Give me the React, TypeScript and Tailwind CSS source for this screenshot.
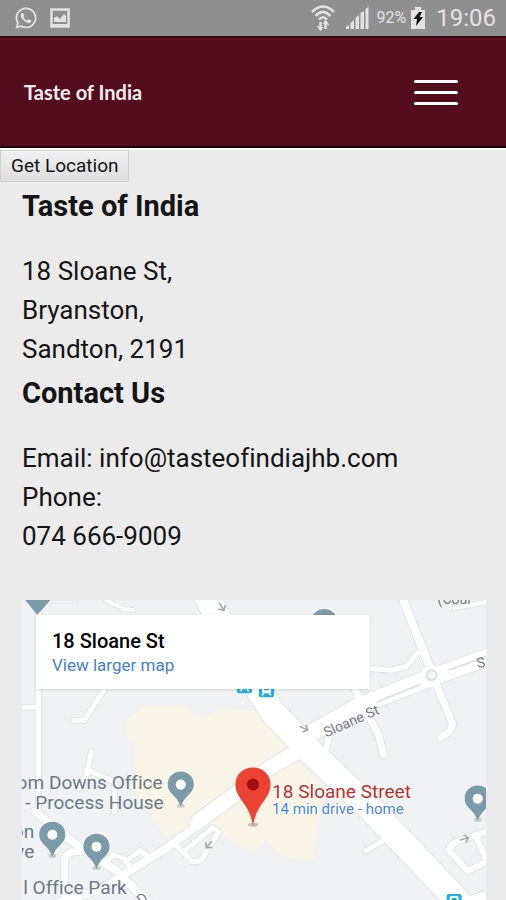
import { FaWhatsapp } from "react-icons/fa";

type PinProps = {
  x: number;
  y: number;
};

type RoadProps = {
  d: string;
  width: number;
};

const roads: RoadProps[] = [
  { d: "M39 600V812", width: 5 },
  { d: "M22 708H39", width: 4 },
  { d: "M30 603H78", width: 1 },
  { d: "M106 601L124 610L133 611", width: 4 },
  { d: "M106 688L85 721H74", width: 5 },
  { d: "M92 752L87 776L79 789M87 770L115 782L115 812", width: 5 },
  { d: "M36 812L80 847L117 871L150 904", width: 8 },
  { d: "M65 904V857L73 852L100 850", width: 7 },
  { d: "M56 904L104 888L127 873L167 848L200 824", width: 8 },
  { d: "M106 862L114 855L124 858L131 868", width: 5 },
  { d: "M126 862L140 851L150 857", width: 5 },
  { d: "M174 843L193 862L201 861L219 832L213 828L187 849", width: 5 },
  { d: "M198 822L243 789L270 768L306 747", width: 15 },
  { d: "M402 599L418 640L431 672", width: 8 },
  { d: "M366 669L392 671L406 667L418 653", width: 5 },
  { d: "M434 681L442 700L452 725L449 732L440 738", width: 7 },
  { d: "M351 682L361 703L378 735L383 755", width: 7 },
  { d: "M454 609L486 603", width: 4 },
  { d: "M490 657L431 678L360 706L298 741", width: 17 },
  { d: "M206 596L240 660L272 712L310 752L372 811L464 908", width: 25 },
  { d: "M325 754L330 729L342 716", width: 6 },
  { d: "M365 851L388 838", width: 5 },
  { d: "M488 831L453 843L448 850L467 871L488 861M475 835L486 862", width: 6 },
  { d: "M462 904L488 895", width: 10 },
];

function PlacePin({ x, y }: PinProps) {
  return (
    <g transform={`translate(${x} ${y})`}>
      <ellipse cx="0" cy="20" rx="4" ry="2" fill="#aeb4b8" opacity="0.6" />
      <path
        d="M0 -14C-7.500 -14 -13 -8.500 -13 -1C-13 4 -10 7 -7 10C-3 14 -2 16 0 21C2 16 3 14 7 10C10 7 13 4 13 -1C13 -8.500 7.500 -14 0 -14Z"
        fill="#7b9aaa"
      />
      <circle cx="0" cy="-1" r="5" fill="#fff" />
    </g>
  );
}

function TransitIcon({ x, y }: PinProps) {
  return (
    <g transform={`translate(${x} ${y})`}>
      <rect width="15" height="14" rx="2" fill="#23aedb" />
      <rect x="3" y="2" width="9" height="8" rx="2" fill="#fff" />
      <rect x="5" y="4" width="5" height="3" fill="#23aedb" />
      <path d="M5 10L3 12M10 10L12 12" stroke="#fff" strokeWidth="1.5" />
    </g>
  );
}

function Arrow({ x, y, angle }: PinProps & { angle: number }) {
  return (
    <path
      d="M-5 0H4M0 -4L4 0L0 4"
      transform={`translate(${x} ${y}) rotate(${angle})`}
      fill="none"
      stroke="#a4a8ad"
      strokeWidth="1.6"
    />
  );
}

function MapDrawing() {
  return (
    <svg
      className="block h-full w-full font-['Roboto',sans-serif]"
      viewBox="22 601 464 299"
      preserveAspectRatio="xMidYMin slice"
      role="img"
      aria-label="Map around 18 Sloane Street"
    >
      <rect x="22" y="601" width="464" height="299" fill="#f0f2f4" />

      {/* Highlighted block */}
      <path
        d="M127 720L143 708L187 707L200 720L222 709L256 712L292 755L322 784L318 834L313 861L283 857L266 840L253 853L222 836L205 818L166 838L150 812L135 792L133 740L127 736Z"
        fill="#f8f5e6"
      />

      {/* Road casings, then the road surfaces on top */}
      <g fill="none" stroke="#e2e4e7" strokeLinecap="round" strokeLinejoin="round">
        {roads.map((road) => (
          <path key={road.d} d={road.d} strokeWidth={road.width + 2} />
        ))}
      </g>
      <g fill="none" stroke="#fff" strokeLinecap="round" strokeLinejoin="round">
        {roads.map((road) => (
          <path key={road.d} d={road.d} strokeWidth={road.width} />
        ))}
      </g>
      <circle cx="431" cy="677" r="11" fill="#fff" />
      <circle cx="431" cy="676" r="5" fill="#f5f6f7" stroke="#dcdee1" strokeWidth="2" />
      <path d="M376 703L420 685M448 671L486 657" stroke="#dfe1e4" strokeWidth="2" />

      <Arrow x={222} y={608} angle={60} />
      <Arrow x={304} y={729} angle={25} />
      <Arrow x={209} y={845} angle={130} />
      <Arrow x={464} y={839} angle={-15} />

      <TransitIcon x={237} y={680} />
      <TransitIcon x={259} y={684} />
      <TransitIcon x={446} y={894} />

      <path d="M26 601H51L38 616Z" fill="#7b9aaa" />
      <PlacePin x={324} y={624} />
      <PlacePin x={181} y={786} />
      <PlacePin x={53} y={836} />
      <PlacePin x={97} y={848} />
      <PlacePin x={477} y={800} />

      <g fill="#6b7a84" fontSize="19">
        <text x="163" y="789" textAnchor="end">om Downs Office</text>
        <text x="164" y="809" textAnchor="end">- Process House</text>
        <text x="35" y="838" textAnchor="end">on</text>
        <text x="35" y="858" textAnchor="end">ve</text>
        <text x="24" y="894">l Office Park</text>
      </g>
      <g fill="#777b80" fontSize="14">
        <text transform="translate(326 738) rotate(-24)">Sloane St</text>
        <text transform="translate(477 669) rotate(-12)">S</text>
        <text x="437" y="605">(Cour</text>
        <text transform="translate(142 905) rotate(-40)">D</text>
      </g>

      {/* Destination */}
      <ellipse cx="253" cy="825" rx="5" ry="2" fill="#8d8d8d" opacity="0.5" />
      <path
        d="M253 768C243 768 235.500 775 235.500 785C235.500 791 238 796 242 801C248 809 251 815 253 826C255 815 258 809 264 801C268 796 270.500 791 270.500 785C270.500 775 263 768 253 768Z"
        fill="#ea4335"
      />
      <circle cx="253" cy="785" r="6" fill="#a50e0e" />
      <g stroke="#fff" strokeWidth="2" strokeLinejoin="round" paintOrder="stroke">
        <text x="272" y="798" fontSize="19" fill="#b9302b">18 Sloane Street</text>
        <text x="272" y="814" fontSize="15" fill="#4a86cf">14 min drive - home</text>
      </g>
    </svg>
  );
}

function StatusBar() {
  return (
    <div className="flex h-9 items-center justify-between bg-[#8f8f8f] pr-2.5 pl-3.5 text-[#e3e3e3]">
      <div className="flex items-center gap-3">
        <FaWhatsapp className="size-6" />
        <svg className="size-5" viewBox="0 0 20 20" fill="none">
          <rect x="1.500" y="1.500" width="17" height="17" stroke="currentColor" strokeWidth="2.500" />
          <path d="M4 14V10L7 8L10 11L14 6L16 8V14Z" fill="currentColor" />
          <path d="M1 17.500H19" stroke="currentColor" strokeWidth="3" />
        </svg>
      </div>
      <div className="flex items-center">
        <svg className="mr-2.5 h-7 w-6" viewBox="0 0 24 28" fill="none" stroke="currentColor" strokeWidth="2.500">
          <path d="M1 8Q12 -3 23 8M4.500 12Q12 4 19.500 12M8 15.500Q12 11 16 15.500" />
          <path d="M9.500 26V18M14.500 17V25" />
          <path d="M6.500 22L9.500 26L11.500 23M12.500 20L14.500 17L17.500 21" strokeWidth="1.500" />
        </svg>
        <svg className="mr-2 h-6 w-6" viewBox="0 0 24 24" fill="currentColor">
          <path d="M1 23V21L4 19V23ZM5.500 23V17L9 14V23ZM10.500 23V12L14 9V23ZM15.500 23V7L19 5V23ZM20.500 23V3L23.500 1V23Z" />
        </svg>
        <span className="mr-1 font-['Roboto',sans-serif] text-base">92%</span>
        <svg className="mr-2.5 h-6 w-4" viewBox="0 0 16 24">
          <path d="M5 1H11V4H15V23H1V4H5Z" fill="currentColor" />
          <path d="M9 6L3.500 13H7L6 20L13 11H9.500L12 6Z" fill="#111" />
        </svg>
        <span className="font-['Roboto',sans-serif] text-2xl leading-9">19:06</span>
      </div>
    </div>
  );
}

function Header() {
  return (
    <header className="flex h-28 items-center justify-between border-y-2 border-t-[#3d0512] border-b-[#1f0209] bg-[#530d1f] pr-12 pl-6">
      <span className="font-['Lato',sans-serif] text-xl font-bold text-[#f5eeee]">
        Taste of India
      </span>
      <button type="button" aria-label="Open menu" className="flex w-11 flex-col gap-2">
        <span className="h-[3px] w-full rounded-sm bg-white" />
        <span className="h-[3px] w-full rounded-sm bg-white" />
        <span className="h-[3px] w-full rounded-sm bg-white" />
      </button>
    </header>
  );
}

export default function App() {
  return (
    <div className="min-h-screen bg-[#ebebeb] font-['Roboto',sans-serif] text-[#151515] [font-variant-ligatures:none]">
      <StatusBar />
      <Header />

      <main className="border-t-2 border-white">
        <button
          type="button"
          className="block h-8 border border-[#cfcfcf] bg-linear-to-b from-[#f1f1f1] to-[#dedede] px-2.5 text-[19px] leading-7"
        >
          Get Location
        </button>

        <div className="pr-5 pl-[22px]">
          <section>
            <h2 className="text-[29px] leading-12 font-bold">Taste of India</h2>
            <p className="pt-[22px] text-[26px] leading-[39px]">
              18 Sloane St,
              <br />
              Bryanston,
              <br />
              Sandton, 2191
            </p>
          </section>

          <section>
            <h2 className="text-[29px] leading-12 font-bold">Contact Us</h2>
            <p className="pt-[22px] text-[26px] leading-[39px]">
              Email: info@tasteofindiajhb.com
              <br />
              Phone:
              <br />
              074 666-9009
            </p>
          </section>

          {/* Map */}
          <section className="relative mt-11 h-[300px] overflow-hidden">
            <MapDrawing />
            <div className="absolute top-[15px] left-3.5 h-[74px] w-[72%] bg-white px-4 pt-3.5 shadow">
              <h3 className="text-xl leading-6 font-medium text-black">18 Sloane St</h3>
              <a href="#map" className="block text-[17px] leading-6 text-[#4a80c4]">
                View larger map
              </a>
            </div>
          </section>
        </div>
      </main>
    </div>
  );
}
